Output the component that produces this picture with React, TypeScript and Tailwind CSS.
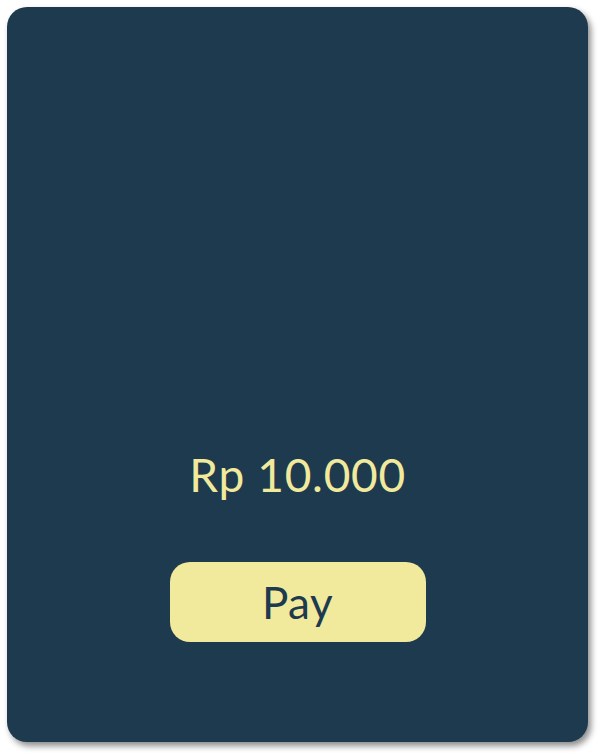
export default function App() {
  return (
    <div className="min-h-[755px] w-full bg-white p-[7px] pr-[13px] pb-[13px]">
      <div
        className="flex h-[735px] w-[581px] flex-col items-center justify-end rounded-[20px] bg-[#1e3a4f] pb-[100px] shadow-[3px_4px_6px_rgba(0,0,0,0.45)]"
        style={{ fontFamily: "Lato, 'Open Sans', sans-serif" }}
      >
        <p className="text-[46px] leading-none tracking-[0.7px] text-[#f1e99b]">Rp 10.000</p>
        <button className="mt-[64px] h-[80px] w-[256px] rounded-[20px] bg-[#f1e99b] text-[44px] leading-none tracking-[0.5px] text-[#1e3a4f]">
          Pay
        </button>
      </div>
    </div>
  );
}
